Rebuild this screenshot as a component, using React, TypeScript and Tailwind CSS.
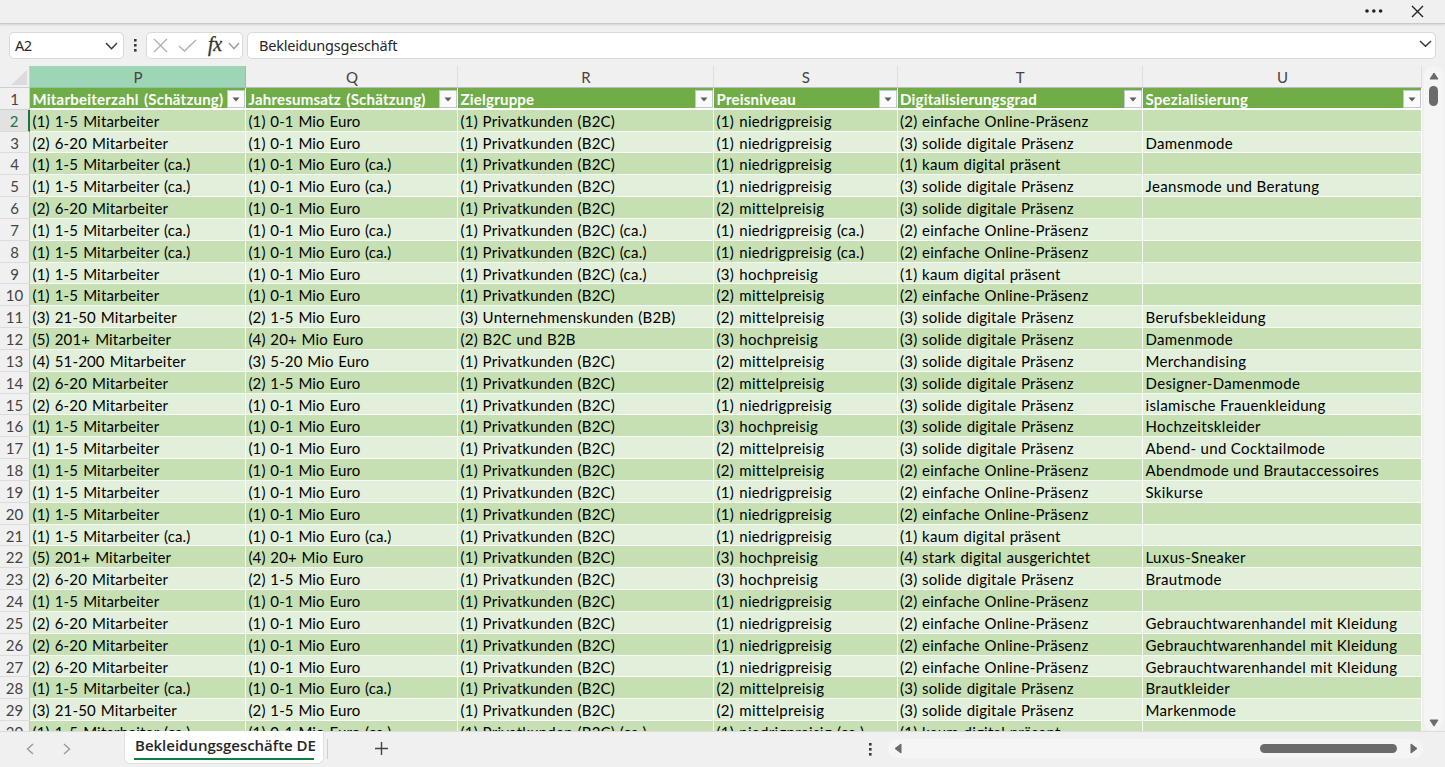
import { ReactNode } from 'react';
import clsx from 'clsx';

type Row = string[];

const COLS: { key: string; label: string; spacing: string }[] = [
  { key: 'P', label: 'Mitarbeiterzahl (Schätzung)', spacing: 'tracking-[0.16px] [word-spacing:1px]' },
  { key: 'Q', label: 'Jahresumsatz (Schätzung)', spacing: 'tracking-[0.12px] [word-spacing:0.8px]' },
  { key: 'R', label: 'Zielgruppe', spacing: 'tracking-[0.24px] [word-spacing:0.6px]' },
  { key: 'S', label: 'Preisniveau', spacing: 'tracking-[0.32px] [word-spacing:0.9px]' },
  { key: 'T', label: 'Digitalisierungsgrad', spacing: 'tracking-[0.24px] [word-spacing:0.6px]' },
  { key: 'U', label: 'Spezialisierung', spacing: 'tracking-[0.34px]' },
];

const GRID = 'grid grid-cols-[30px_216px_212px_256px_183.5px_245.5px_279px] grid-rows-[100%]';

const M1 = '(1) 1-5 Mitarbeiter';
const M1C = '(1) 1-5 Mitarbeiter (ca.)';
const M2 = '(2) 6-20 Mitarbeiter';
const M3 = '(3) 21-50 Mitarbeiter';
const M4 = '(4) 51-200 Mitarbeiter';
const M5 = '(5) 201+ Mitarbeiter';

const E1 = '(1) 0-1 Mio Euro';
const E1C = '(1) 0-1 Mio Euro (ca.)';
const E2 = '(2) 1-5 Mio Euro';
const E3 = '(3) 5-20 Mio Euro';
const E4 = '(4) 20+ Mio Euro';

const Z1 = '(1) Privatkunden (B2C)';
const Z1C = '(1) Privatkunden (B2C) (ca.)';
const Z2 = '(2) B2C und B2B';
const Z3 = '(3) Unternehmenskunden (B2B)';

const P1 = '(1) niedrigpreisig';
const P1C = '(1) niedrigpreisig (ca.)';
const P2 = '(2) mittelpreisig';
const P3 = '(3) hochpreisig';

const D1 = '(1) kaum digital präsent';
const D2 = '(2) einfache Online-Präsenz';
const D3 = '(3) solide digitale Präsenz';
const D4 = '(4) stark digital ausgerichtet';

const ROWS: Row[] = [
  [M1, E1, Z1, P1, D2, ''],
  [M2, E1, Z1, P1, D3, 'Damenmode'],
  [M1C, E1C, Z1, P1, D1, ''],
  [M1C, E1C, Z1, P1, D3, 'Jeansmode und Beratung'],
  [M2, E1, Z1, P2, D3, ''],
  [M1C, E1C, Z1C, P1C, D2, ''],
  [M1C, E1C, Z1C, P1C, D2, ''],
  [M1, E1, Z1C, P3, D1, ''],
  [M1, E1, Z1, P2, D2, ''],
  [M3, E2, Z3, P2, D3, 'Berufsbekleidung'],
  [M5, E4, Z2, P3, D3, 'Damenmode'],
  [M4, E3, Z1, P2, D3, 'Merchandising'],
  [M2, E2, Z1, P2, D3, 'Designer-Damenmode'],
  [M2, E1, Z1, P1, D3, 'islamische Frauenkleidung'],
  [M1, E1, Z1, P3, D3, 'Hochzeitskleider'],
  [M1, E1, Z1, P2, D3, 'Abend- und Cocktailmode'],
  [M1, E1, Z1, P2, D2, 'Abendmode und Brautaccessoires'],
  [M1, E1, Z1, P1, D2, 'Skikurse'],
  [M1, E1, Z1, P1, D2, ''],
  [M1C, E1C, Z1, P1, D1, ''],
  [M5, E4, Z1, P3, D4, 'Luxus-Sneaker'],
  [M2, E2, Z1, P3, D3, 'Brautmode'],
  [M1, E1, Z1, P1, D2, ''],
  [M2, E1, Z1, P1, D2, 'Gebrauchtwarenhandel mit Kleidung'],
  [M2, E1, Z1, P1, D2, 'Gebrauchtwarenhandel mit Kleidung'],
  [M2, E1, Z1, P1, D2, 'Gebrauchtwarenhandel mit Kleidung'],
  [M1C, E1C, Z1, P2, D3, 'Brautkleider'],
  [M3, E2, Z1, P2, D3, 'Markenmode'],
  [M1C, E1C, Z1C, P1C, D1, ''],
];

const Stroke = ({ d, w, h, className }: { d: string; w: number; h: number; className: string }) => (
  <svg width={w} height={h} viewBox={`0 0 ${w} ${h}`} fill="none" stroke="currentColor" className={clsx('shrink-0', className)}>
    <path d={d} strokeWidth="1.4" />
  </svg>
);

const Arrow = ({ points, w, h }: { points: string; w: number; h: number }) => (
  <svg width={w} height={h} className="shrink-0 text-[#6b6b6b]" fill="currentColor" stroke="currentColor" strokeLinejoin="round">
    <polygon points={points} />
  </svg>
);

const Dots = () => (
  <svg width="3" height="13" fill="#3a3a3a" className="shrink-0">
    <rect width="2.6" height="2.6" y="0" />
    <rect width="2.6" height="2.6" y="5" />
    <rect width="2.6" height="2.6" y="10" />
  </svg>
);

const Box = ({ children, className }: { children: ReactNode; className: string }) => (
  <div className={clsx('flex h-[27px] items-center rounded-[5px] border border-[#d9d9d9] bg-white', className)}>{children}</div>
);

function TitleBar() {
  return (
    <div className="flex h-[24px] shrink-0 items-center justify-end border-b border-[#c9c9c9] pr-[21px] shadow-[0_1px_2px_#d4d4d4]">
      <svg width="18" height="4" fill="#222" className="mr-[28px] mb-[1px]">
        <circle cx="2" cy="2" r="1.8" />
        <circle cx="8.8" cy="2" r="1.8" />
        <circle cx="15.6" cy="2" r="1.8" />
      </svg>
      <Stroke w={13} h={13} d="M1 1L12 12M12 1L1 12" className="text-[#222]" />
    </div>
  );
}

function FormulaBar() {
  return (
    <div className="flex h-[42px] shrink-0 items-center pt-px pr-[9px] pl-[9px] text-[14.5px] text-[#262626]">
      <Box className="w-[115px] justify-between pr-[5px] pl-[5px]">
        <span className="pt-px tracking-[-0.5px]">A2</span>
        <Stroke w={13} h={8} d="M1 1L6.5 6.8L12 1" className="text-[#333]" />
      </Box>
      <div className="flex w-[22px] justify-center">
        <Dots />
      </div>
      <Box className="w-[97px] pl-[6px]">
        <Stroke w={15} h={15} d="M1 1L14 14M14 1L1 14" className="text-[#b0b0b0]" />
        <Stroke w={19} h={13} d="M1 7L6.5 12L18 1" className="ml-[10px] text-[#b0b0b0]" />
        <span className="ml-[11px] w-[17px] pb-[3px] font-['Liberation_Serif',serif] text-[20px] leading-none tracking-[-0.2px] text-[#333] italic [-webkit-text-stroke:0.3px_#333]">
          fx
        </span>
        <Stroke w={12} h={8} d="M1 1L6 6.8L11 1" className="ml-[3px] text-[#9b9b9b]" />
      </Box>
      <Box className="ml-[4px] flex-1 justify-between pr-[3px] pl-[11px]">
        <span className="pt-px tracking-[-0.2px]">Bekleidungsgeschäft</span>
        <Stroke w={13} h={8} d="M1 1L6.5 6.2L12 1" className="mb-[3px] text-[#333]" />
      </Box>
    </div>
  );
}

function ColumnHeaders() {
  return (
    <div className={clsx(GRID, 'h-[22px] text-center text-[15px] leading-[23px] text-[#444]')}>
      <div className="flex justify-end border-r border-b border-[#cfcfcf] pt-[4px] pr-[2px]">
        <svg width="16" height="15" fill="#dcdcdc">
          <polygon points="16,0 16,15 0,15" />
        </svg>
      </div>
      {COLS.map((c, i) => (
        <div
          key={c.key}
          className={clsx('border-r border-b pl-px', i === 0 ? 'border-[#8fc4a6] bg-[#9fd5b7]' : 'border-r-[#dedede] border-b-[#bdbdbd]')}
        >
          {c.key}
        </div>
      ))}
    </div>
  );
}

function TableHead() {
  return (
    <div className={clsx(GRID, 'h-[21.8px]')}>
      <div className="border-r border-b border-[#cfcfcf] text-center text-[15px] leading-[23px] text-[#444]">1</div>
      {COLS.map((c) => (
        <div key={c.key} className="flex items-start justify-between border-r border-b-2 border-white bg-[#70ad47] pl-[2.5px]">
          <span className="text-[15px] leading-[23px] font-bold tracking-[0.22px] whitespace-nowrap text-white [word-spacing:1.5px]">
            {c.label}
          </span>
          <span className="mt-[2px] flex h-[18px] w-[18px] shrink-0 items-center justify-center border border-[#c3c7d2] bg-[#fafafc]">
            <svg width="8" height="5" fill="#5b5b5b">
              <polygon points="0.5,0.5 7.5,0.5 4,4.5" />
            </svg>
          </span>
        </div>
      ))}
    </div>
  );
}

function TableRow({ row, n }: { row: Row; n: number }) {
  const active = n === 2;
  return (
    <div className={clsx(GRID, 'h-[21.83px] text-[15px] leading-[22.6px]')}>
      <div
        className={clsx(
          'border-b border-[#dcdcdc] text-center',
          active ? 'border-r-2 border-r-[#217346] bg-[#e2e2e2] text-[#217346]' : 'border-r border-r-[#c4c4c4] text-[#444]',
        )}
      >
        {n}
      </div>
      {row.map((cell, i) => (
        <div
          key={i}
          className={clsx(
            'border-r border-b border-white/85 pl-[2.5px] whitespace-nowrap text-black',
            COLS[i].spacing,
            n % 2 === 0 ? 'bg-[#c6e0b4]' : 'bg-[#e2efda]',
          )}
        >
          {cell}
        </div>
      ))}
    </div>
  );
}

function VerticalScroll() {
  return (
    <div className="flex w-[19px] flex-col items-center rounded-[9px] bg-[#f5f5f5] pt-[6px] pb-[4px]">
      <Arrow w={10} h={8} points="5,1 9,7 1,7" />
      <div className="mt-[6px] h-[20px] w-[9px] rounded-full bg-[#6b6b6b]" />
      <div className="flex-1" />
      <Arrow w={10} h={8} points="1,1 9,1 5,7" />
    </div>
  );
}

function SheetBar() {
  return (
    <div className="flex h-[36px] shrink-0 items-start border-t border-[#dcdcdc]">
      <div className="flex h-[33px] w-[124px] items-center pl-[26px]">
        <Stroke w={8} h={12} d="M7 1L1.5 6L7 11" className="text-[#9a9a9a]" />
        <Stroke w={8} h={12} d="M1 1L6.5 6L1 11" className="ml-[29px] text-[#9a9a9a]" />
      </div>
      <div className="-mt-px flex h-[33px] w-[200px] flex-col items-center rounded-b-[6px] border border-t-0 border-[#e0e0e0] bg-white">
        <span className="h-[27px] pl-[3px] font-['Open_Sans',sans-serif] text-[15px] leading-[29px] font-semibold tracking-[-0.02px] whitespace-nowrap text-[#262626]">
          Bekleidungsgeschäfte DE
        </span>
        <div className="h-[2px] w-[180px] bg-[#107c41]" />
      </div>
      <div className="mt-[7px] ml-[3px] h-[20px] w-px bg-[#cfcfcf]" />
      <Stroke w={13} h={13} d="M6.5 0V13M0 6.5H13" className="mt-[10px] ml-[47px] text-[#444]" />
      <div className="flex-1" />
      <div className="mt-[11px]">
        <Dots />
      </div>
      <div className="mt-[7px] mr-[22px] ml-[16px] flex h-[19px] w-[535px] items-center rounded-[9px] bg-[#f5f5f5] pr-[5px] pl-[6px]">
        <Arrow w={8} h={11} points="7,1 7,10 1,5.5" />
        <div className="flex-1" />
        <div className="mr-[13px] h-[9px] w-[137px] rounded-full bg-[#6b6b6b]" />
        <Arrow w={8} h={11} points="1,1 1,10 7,5.5" />
      </div>
    </div>
  );
}

export default function App() {
  return (
    <div className="flex h-[767px] w-[1445px] flex-col overflow-hidden bg-[#f0f0f0] font-['Noto_Sans',sans-serif]">
      <TitleBar />
      <FormulaBar />
      <div className="flex h-[665px] shrink-0">
        <div className="w-[1422px] overflow-hidden font-['Lato',sans-serif]">
          <ColumnHeaders />
          <TableHead />
          {ROWS.map((row, i) => (
            <TableRow key={i} row={row} n={i + 2} />
          ))}
        </div>
        <div className="ml-[2px] flex">
          <VerticalScroll />
        </div>
      </div>
      <SheetBar />
    </div>
  );
}
